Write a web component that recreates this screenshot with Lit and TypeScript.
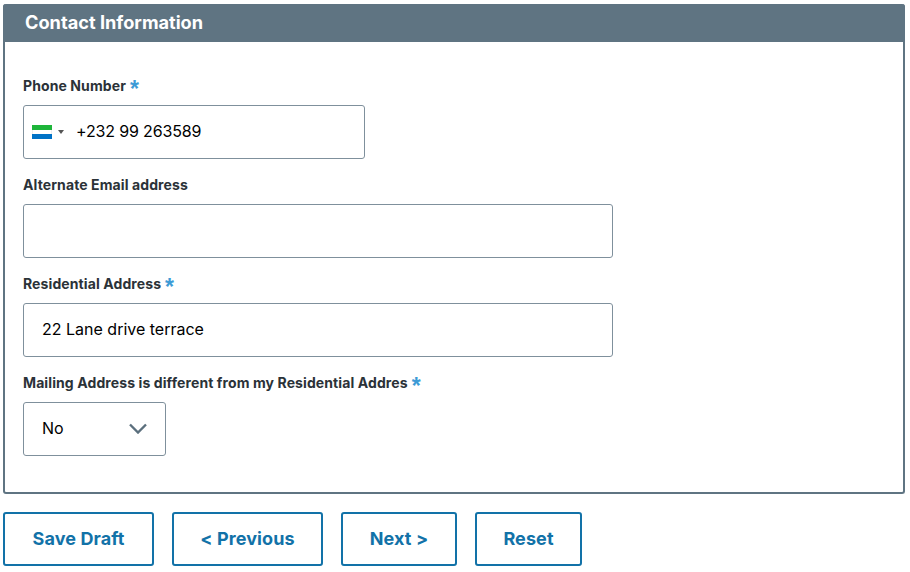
import { LitElement, html, css } from "lit";
import { customElement } from "lit/decorators.js";

const chevron = html`<svg class="chev" width="18" height="11" viewBox="0 0 18 11" aria-hidden="true"><path d="M1 1.5l8 8 8-8" fill="none" stroke="#5b6f7d" stroke-width="2.4"/></svg>`;

@customElement("app-root")
export class AppRoot extends LitElement {
  static styles = css`
    :host { display: block; width: 910px; height: 572px; overflow: hidden; background: #fff; font-family: Inter, "Noto Sans", sans-serif; color: #000; box-sizing: border-box; padding: 4px 5px 0 3px; }
    * { box-sizing: border-box; }
    .card { height: 490px; border: 2px solid #5f7482; border-top: 0; border-radius: 3px; display: flex; flex-direction: column; }
    .head { height: 38px; margin: 0 -2px; background: #5f7482; border-radius: 3px 3px 0 0; color: #fff; font-size: 18.2px; font-weight: 700; line-height: 37px; padding-left: 22px; flex: none; }
    .body { padding: 34px 0 0 18px; display: flex; flex-direction: column; gap: 16px; }
    .field { display: flex; flex-direction: column; gap: 9px; }
    label { display: flex; align-items: center; gap: 4px; height: 20px; font-size: 14px; letter-spacing: 0.1px; font-weight: 700; line-height: 20px; color: #2b3238; white-space: nowrap; }
    label b { color: #3d9bd6; font-family: "Liberation Sans", sans-serif; font-size: 23px; font-weight: 700; line-height: 20px; padding-top: 6px; }
    .input { height: 54px; border: 1px solid #7f909c; border-radius: 3px; display: flex; align-items: center; padding: 0 0 2px 18px; font-size: 16px; background: #fff; }
    .phone { width: 342px; padding-left: 8px; }
    .wide { width: 590px; }
    .select { width: 143px; justify-content: space-between; padding-right: 18px; }
    .flag { width: 20px; height: 14px; display: flex; flex-direction: column; margin-top: 2px; }
    .flag i { flex: 1; display: block; }
    .g { background: #1eb53a; } .w { background: #fff; box-shadow: inset 1px 0 #eee, inset -1px 0 #eee; } .bl { background: #0072c6; }
    .caret { width: 0; height: 0; border: 3px solid transparent; border-top: 4px solid #555; border-bottom: 0; margin: 2px 12px 0 6px; }
    .num { letter-spacing: -0.15px; }
    .actions { display: flex; gap: 18px; margin-top: 18px; }
    button { height: 54px; border: 2px solid #1272a8; border-radius: 3px; background: #fff; color: #1272a8; font: 700 18px Inter, "Noto Sans", sans-serif; letter-spacing: 0.1px; padding: 0 0 2px; }
    .b1, .b2 { width: 151px; } .b3 { width: 116px; } .b4 { width: 107px; }
  `;

  render() {
    return html`
      <section class="card">
        <div class="head">Contact Information</div>
        <div class="body">
          <div class="field">
            <label>Phone Number <b>*</b></label>
            <div class="input phone"><span class="flag"><i class="g"></i><i class="w"></i><i class="bl"></i></span><span class="caret"></span><span class="num">+232 99 263589</span></div>
          </div>
          <div class="field">
            <label>Alternate Email address</label>
            <div class="input wide"></div>
          </div>
          <div class="field">
            <label>Residential Address <b>*</b></label>
            <div class="input wide">22 Lane drive terrace</div>
          </div>
          <div class="field">
            <label>Mailing Address is different from my Residential Addres <b>*</b></label>
            <div class="input select"><span>No</span>${chevron}</div>
          </div>
        </div>
      </section>
      <div class="actions">
        <button class="b1">Save Draft</button>
        <button class="b2">&lt; Previous</button>
        <button class="b3">Next &gt;</button>
        <button class="b4">Reset</button>
      </div>
    `;
  }
}
